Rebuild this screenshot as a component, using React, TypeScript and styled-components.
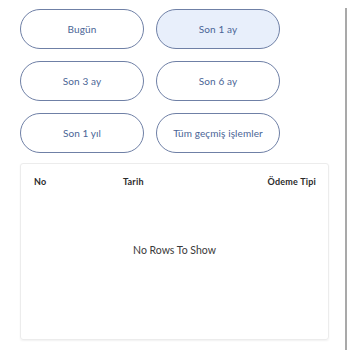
import React, { useState } from "react";
import styled, { createGlobalStyle } from "styled-components";

const GlobalStyle = createGlobalStyle`
  html, body {
    margin: 0;
    padding: 0;
    background: #ffffff;
    font-family: Lato, "Noto Sans", sans-serif;
    overflow: hidden;
  }
`;

const periods = [
  "Bugün",
  "Son 1 ay",
  "Son 3 ay",
  "Son 6 ay",
  "Son 1 yıl",
  "Tüm geçmiş işlemler",
];

const Page = styled.div`
  display: flex;
  width: 350px;
  height: 350px;
  box-sizing: border-box;
`;

const Content = styled.main`
  flex: 1;
  display: flex;
  flex-direction: column;
  padding: 9px 0 0 20px;
`;

const ScrollTrack = styled.div`
  width: 2px;
  margin: 8px 3px 0 0;
  background: #a9a9a9;
`;

const FilterGrid = styled.div`
  display: grid;
  grid-template-columns: repeat(2, 124px);
  column-gap: 12px;
  row-gap: 12px;
`;

const FilterButton = styled.button<{ $active: boolean }>`
  height: 40px;
  border-radius: 20px;
  border: 1px solid #6f80a6;
  background: ${({ $active }) => ($active ? "#e8effb" : "#ffffff")};
  color: #4a6596;
  font-family: Lato, "Noto Sans", sans-serif;
  font-size: 10px;
  letter-spacing: 0.1px;
  padding: 0;
  cursor: pointer;
`;

const TableCard = styled.section`
  margin-top: 10px;
  width: 309px;
  height: 177px;
  box-sizing: border-box;
  border: 1px solid #ececec;
  border-radius: 3px;
  box-shadow: 0 1px 2px rgba(0, 0, 0, 0.06);
  display: flex;
  flex-direction: column;
`;

const HeaderRow = styled.div`
  display: grid;
  grid-template-columns: 89px 1fr auto;
  align-items: center;
  height: 34px;
  padding: 0 12px 0 13px;
  font-size: 9px;
  font-weight: 700;
  letter-spacing: 0.2px;
  color: #2b2b2b;
`;

const EmptyState = styled.div`
  flex: 1;
  display: flex;
  align-items: center;
  justify-content: center;
  padding-bottom: 38px;
  font-size: 10.5px;
  color: #3a3a3a;
`;

export default function App() {
  const [active, setActive] = useState(1);

  return (
    <>
      <GlobalStyle />
      <Page>
        <Content>
          <FilterGrid>
            {periods.map((label, i) => (
              <FilterButton
                key={label}
                $active={i === active}
                onClick={() => setActive(i)}
              >
                {label}
              </FilterButton>
            ))}
          </FilterGrid>
          <TableCard>
            <HeaderRow>
              <span>No</span>
              <span>Tarih</span>
              <span>Ödeme Tipi</span>
            </HeaderRow>
            <EmptyState>No Rows To Show</EmptyState>
          </TableCard>
        </Content>
        <ScrollTrack />
      </Page>
    </>
  );
}
